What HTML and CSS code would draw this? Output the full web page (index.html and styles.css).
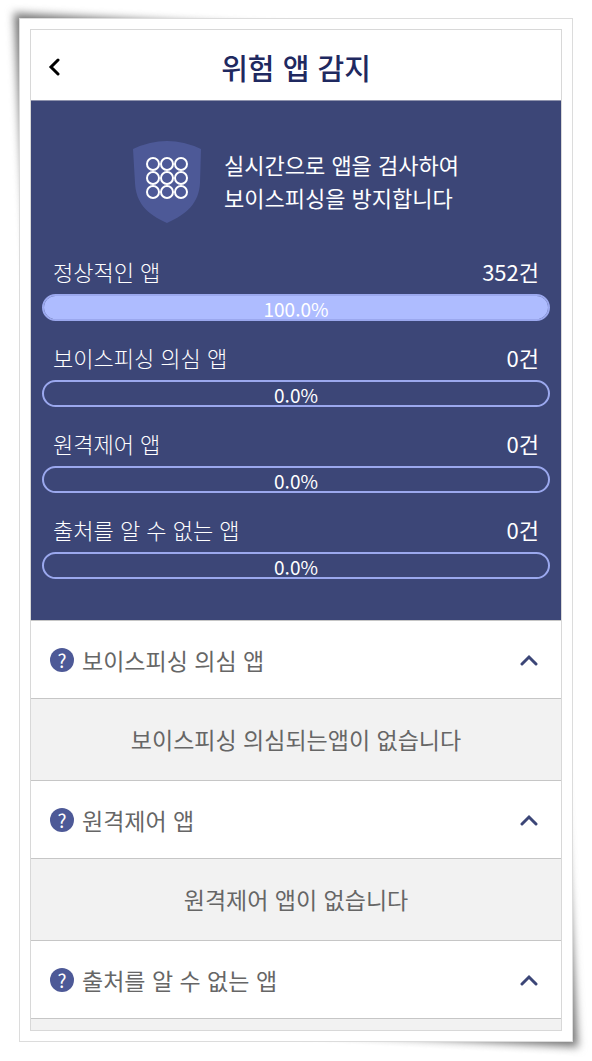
FILE: index.html
```
<!DOCTYPE html>
<html lang="ko">
<head>
	<meta charset="utf-8"/>
	<meta name="viewport" content="width=device-width, initial-scale=1">
	<title>위험 앱 감지</title>
	<link rel="stylesheet" href="styles.css">
</head>
<body>

	<div class="frame">
		<main class="screen">

			<header class="topbar">
				<button class="back" type="button" aria-label="뒤로">
					<svg width="12" height="18" viewBox="0 0 12 18"><path d="M10 2 L3 9 L10 16"/></svg>
				</button>
				<h1>위험 앱 감지</h1>
			</header>

			<section class="summary">
				<div class="intro">
					<svg class="shield" width="68" height="82" viewBox="0 0 68 82">
						<path class="shield-body" d="M0 8 Q34 -8 68 8 L67 42 C66 62 54 73 34 82 C14 73 3 62 2 42 Z"/>
						<g class="dots">
							<circle cx="20" cy="23" r="6"/><circle cx="34" cy="23" r="6"/><circle cx="48" cy="23" r="6"/>
							<circle cx="20" cy="37" r="6"/><circle cx="34" cy="37" r="6"/><circle cx="48" cy="37" r="6"/>
							<circle cx="20" cy="51" r="6"/><circle cx="34" cy="51" r="6"/><circle cx="48" cy="51" r="6"/>
						</g>
					</svg>
					<p>실시간으로 앱을 검사하여<br>보이스피싱을 방지합니다</p>
				</div>

				<div class="stats">
					<div class="stat">
						<div class="stat-head"><span id="s1">정상적인 앱</span><b>352건</b></div>
						<div class="bar" role="progressbar" aria-labelledby="s1" aria-valuenow="100">
							<div class="fill" style="width:100%"></div>
							<span class="percent">100.0%</span>
						</div>
					</div>
					<div class="stat">
						<div class="stat-head"><span id="s2">보이스피싱 의심 앱</span><b>0건</b></div>
						<div class="bar" role="progressbar" aria-labelledby="s2" aria-valuenow="0">
							<div class="fill" style="width:0%"></div>
							<span class="percent">0.0%</span>
						</div>
					</div>
					<div class="stat">
						<div class="stat-head"><span id="s3">원격제어 앱</span><b>0건</b></div>
						<div class="bar" role="progressbar" aria-labelledby="s3" aria-valuenow="0">
							<div class="fill" style="width:0%"></div>
							<span class="percent">0.0%</span>
						</div>
					</div>
					<div class="stat">
						<div class="stat-head"><span id="s4">출처를 알 수 없는 앱</span><b>0건</b></div>
						<div class="bar" role="progressbar" aria-labelledby="s4" aria-valuenow="0">
							<div class="fill" style="width:0%"></div>
							<span class="percent">0.0%</span>
						</div>
					</div>
				</div>
			</section>

			<section class="group">
				<div class="group-head">
					<button class="help" type="button">?</button>
					<h2>보이스피싱 의심 앱</h2>
					<button class="toggle" type="button" aria-label="접기" aria-expanded="true">
						<svg width="18" height="12" viewBox="0 0 18 12"><path d="M2 10 L9 3 L16 10"/></svg>
					</button>
				</div>
				<p class="panel">보이스피싱 의심되는앱이 없습니다</p>
			</section>

			<section class="group">
				<div class="group-head">
					<button class="help" type="button">?</button>
					<h2>원격제어 앱</h2>
					<button class="toggle" type="button" aria-label="접기" aria-expanded="true">
						<svg width="18" height="12" viewBox="0 0 18 12"><path d="M2 10 L9 3 L16 10"/></svg>
					</button>
				</div>
				<p class="panel">원격제어 앱이 없습니다</p>
			</section>

			<section class="group last">
				<div class="group-head">
					<button class="help" type="button">?</button>
					<h2>출처를 알 수 없는 앱</h2>
					<button class="toggle" type="button" aria-label="접기" aria-expanded="true">
						<svg width="18" height="12" viewBox="0 0 18 12"><path d="M2 10 L9 3 L16 10"/></svg>
					</button>
				</div>
				<div class="rest"></div>
			</section>

		</main>
	</div>

</body>
</html>
```
FILE: styles.css
```
*{
	margin:0;padding:0;
	box-sizing:border-box;
}
body{
	display:flex;
	min-height:100vh;
	padding:19px 20px 20px;
	background:#fff;
	color:#666;
	font-family:"Noto Sans CJK KR",sans-serif;
}
button{
	border:0;
	background:none;
	font-family:inherit;
	cursor:pointer;
}
svg{
	display:block;
	fill:none;
}

/* paper frame with two lifted corners */
.frame{
	position:relative;
	z-index:0;
	flex:1;
	display:flex;
}
.frame::before,.frame::after{
	content:"";
	position:absolute;
	z-index:-1;
	width:50%;
	height:40%;
	background:#777;
	filter:blur(4px);
	transform:skew(3deg,3deg);
}
.frame::before{
	left:-6px;
	top:-6px;
	transform-origin:left top;
}
.frame::after{
	right:-6px;
	bottom:-6px;
	transform-origin:right bottom;
}
.screen{
	flex:1;
	display:flex;
	flex-direction:column;
	margin:10px;
	border:1px solid #d8d8d8;
	outline:10px solid #fff;
	background:#fff;
	box-shadow:0 0 0 11px #dcdcdc;
}

.topbar{
	display:grid;
	grid-template-columns:48px 1fr 48px;
	align-items:center;
	height:71px;
	border-bottom:1px solid #8f93ad;
}
.topbar h1{
	padding-top:3px;
	color:#1f2960;
	font-size:29px;
	line-height:40px;
	font-weight:500;
	text-align:center;
}
.back{
	display:flex;
	padding:4px 0 0 17px;
}
.back path{
	stroke:#000;
	stroke-width:3;
	stroke-linecap:round;
}

.summary{
	padding:40px 11px 41px;
	background:#3c4677;
	color:#fff;
}
.intro{
	display:flex;
	justify-content:center;
	gap:23px;
	margin-bottom:32px;
}
.intro p{
	padding-top:7px;
	font-size:22px;
	line-height:33px;
}
.shield-body{
	fill:#4d5997;
}
.dots{
	stroke:#fff;
	stroke-width:2;
}
.stats{
	display:grid;
	gap:20px;
}
.stat-head{
	display:flex;
	justify-content:space-between;
	padding:0 11px;
	margin-bottom:7px;
	font-size:22px;
	line-height:32px;
	font-weight:300;
}
.stat-head b{
	font-weight:400;
}
.bar{
	display:grid;
	grid-template-rows:23px;
	border:2px solid #9ba8ee;
	border-radius:14px;
}
.fill,.percent{
	grid-area:1/1;
}
.fill{
	border-radius:12px;
	background:#aebcff;
}
.percent{
	font-size:19px;
	line-height:26px;
	text-align:center;
}

.group-head{
	display:flex;
	align-items:center;
	height:78px;
	padding:0 23px 0 19px;
	border-top:1px solid #c6c6c6;
}
.help{
	width:24px;
	height:24px;
	border-radius:50%;
	background:#4d5997;
	color:#fff;
	font-size:19px;
	line-height:24px;
	text-align:center;
}
.group-head h2{
	flex:1;
	padding-left:8px;
	font-size:23px;
	line-height:36px;
	font-weight:400;
}
.toggle path{
	stroke:#3c4677;
	stroke-width:3;
	stroke-linecap:round;
}
.panel{
	height:82px;
	border-top:1px solid #c6c6c6;
	background:#f2f2f2;
	font-size:23px;
	line-height:81px;
	text-align:center;
}
.last{
	flex:1;
	display:flex;
	flex-direction:column;
}
.rest{
	flex:1;
	border-top:1px solid #c6c6c6;
	background:#f2f2f2;
}
```
